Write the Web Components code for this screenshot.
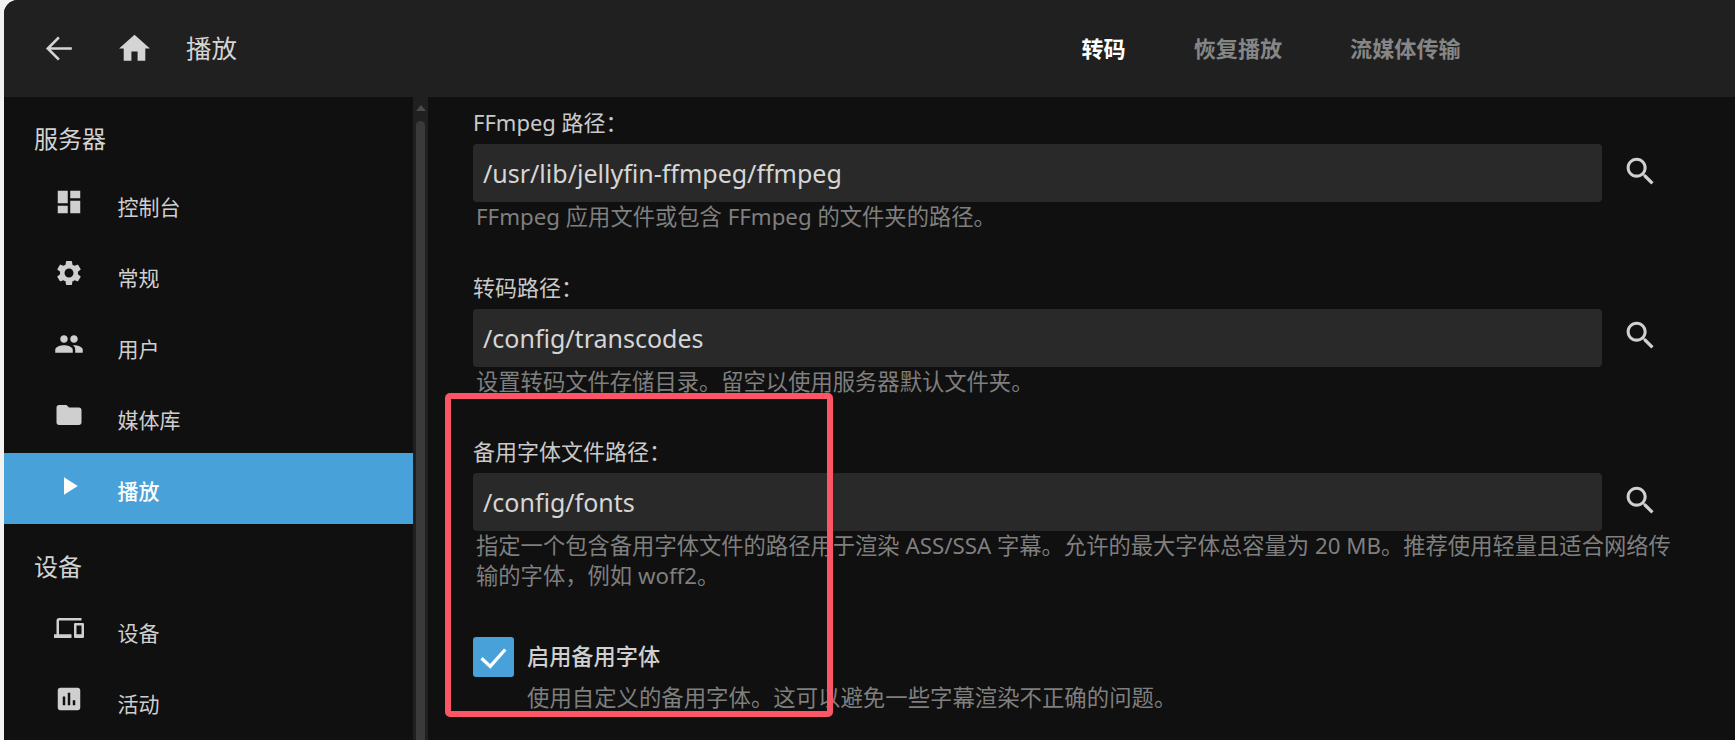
<!doctype html>
<html lang="zh-CN"><head><meta charset="utf-8"><title>播放</title>
<style>
html,body{margin:0;height:100%;background:#f2f2f2;overflow:hidden}
body{font-family:"Noto Sans","Noto Sans CJK SC",sans-serif;color:#d2d2d2}
</style></head><body>
<app-shell>
  <app-header slot="header" page-title="播放">
    <header-tab active>转码</header-tab>
    <header-tab>恢复播放</header-tab>
    <header-tab>流媒体传输</header-tab>
  </app-header>
  <side-nav slot="nav">
    <nav-title>服务器</nav-title>
    <nav-item icon="dashboard">控制台</nav-item>
    <nav-item icon="settings">常规</nav-item>
    <nav-item icon="people">用户</nav-item>
    <nav-item icon="folder">媒体库</nav-item>
    <nav-item icon="play" active>播放</nav-item>
    <nav-title>设备</nav-title>
    <nav-item icon="devices">设备</nav-item>
    <nav-item icon="assessment">活动</nav-item>
  </side-nav>
  <path-field label="FFmpeg 路径：" value="/usr/lib/jellyfin-ffmpeg/ffmpeg">FFmpeg 应用文件或包含 FFmpeg 的文件夹的路径。</path-field>
  <path-field label="转码路径：" value="/config/transcodes">设置转码文件存储目录。留空以使用服务器默认文件夹。</path-field>
  <path-field label="备用字体文件路径：" value="/config/fonts">指定一个包含备用字体文件的路径用于渲染 ASS/SSA 字幕。允许的最大字体总容量为 20 MB。推荐使用轻量且适合网络传输的字体，例如 woff2。</path-field>
  <check-field label="启用备用字体">使用自定义的备用字体。这可以避免一些字幕渲染不正确的问题。</check-field>
  <highlight-box slot="overlay"></highlight-box>
</app-shell>
<script>
const ICONS={
 back:'<path d="M20 12H4.6M11.6 4.8 4.4 12l7.2 7.2" fill="none" stroke="currentColor" stroke-width="1.7"/>',
 home:'<path d="M10 20v-6h4v6h5v-8h3L12 3 2 12h3v8z"/>',
 dashboard:'<path d="M3 13h8V3H3v10zm0 8h8v-6H3v6zm10 0h8V11h-8v10zm0-18v6h8V3h-8z"/>',
 settings:'<path d="M19.14 12.94c.04-.3.06-.61.06-.94 0-.32-.02-.64-.07-.94l2.03-1.58a.49.49 0 0 0 .12-.61l-1.92-3.32a.488.488 0 0 0-.59-.22l-2.39.96c-.5-.38-1.03-.7-1.62-.94l-.36-2.54a.484.484 0 0 0-.48-.41h-3.84c-.24 0-.43.17-.47.41l-.36 2.54c-.59.24-1.13.57-1.62.94l-2.39-.96c-.22-.08-.47 0-.59.22L2.74 8.87c-.12.21-.08.47.12.61l2.03 1.58c-.05.3-.09.63-.09.94s.02.64.07.94l-2.03 1.58a.49.49 0 0 0-.12.61l1.92 3.32c.12.22.37.29.59.22l2.39-.96c.5.38 1.03.7 1.62.94l.36 2.54c.05.24.24.41.48.41h3.84c.24 0 .44-.17.47-.41l.36-2.54c.59-.24 1.13-.56 1.62-.94l2.39.96c.22.08.47 0 .59-.22l1.92-3.32c.12-.22.07-.47-.12-.61l-2.01-1.58zM12 15.6c-1.98 0-3.6-1.62-3.6-3.6s1.62-3.6 3.6-3.6 3.6 1.62 3.6 3.6-1.62 3.6-3.6 3.6z"/>',
 people:'<path d="M16 11c1.66 0 2.99-1.34 2.99-3S17.66 5 16 5c-1.66 0-3 1.34-3 3s1.34 3 3 3zm-8 0c1.66 0 2.99-1.34 2.99-3S9.66 5 8 5C6.34 5 5 6.34 5 8s1.34 3 3 3zm0 2c-2.33 0-7 1.17-7 3.5V19h14v-2.5c0-2.33-4.67-3.5-7-3.5zm8 0c-.29 0-.62.02-.97.05 1.16.84 1.97 1.97 1.97 3.45V19h6v-2.5c0-2.33-4.67-3.5-7-3.5z"/>',
 folder:'<path d="M10 4H4c-1.1 0-1.99.9-1.99 2L2 18c0 1.1.9 2 2 2h16c1.1 0 2-.9 2-2V8c0-1.1-.9-2-2-2h-8l-2-2z"/>',
 play:'<path d="M8 5v14l11-7z"/>',
 devices:'<path d="M4 6h18V4H4c-1.1 0-2 .9-2 2v11H0v3h14v-3H4V6zm19 2h-6c-.55 0-1 .45-1 1v10c0 .55.45 1 1 1h6c.55 0 1-.45 1-1V9c0-.55-.45-1-1-1zm-1 9h-4v-7h4v7z"/>',
 assessment:'<path d="M19 3H5c-1.1 0-2 .9-2 2v14c0 1.1.9 2 2 2h14c1.1 0 2-.9 2-2V5c0-1.1-.9-2-2-2zM9 17H7v-7h2v7zm4 0h-2V7h2v10zm4 0h-2v-4h2v4z"/>',
 search:'<path d="M15.5 14h-.79l-.28-.27C15.41 12.59 16 11.11 16 9.5 16 5.91 13.09 3 9.5 3S3 5.91 3 9.5 5.91 16 9.5 16c1.61 0 3.09-.59 4.23-1.57l.27.28v.79l5 4.99L20.49 19l-4.99-5zm-6 0C7.01 14 5 11.99 5 9.5S7.01 5 9.5 5 14 7.01 14 9.5 11.99 14 9.5 14z"/>'
};
const svg=(n,s)=>`<svg width="${s}" height="${s}" viewBox="0 0 24 24" fill="currentColor" aria-hidden="true">${ICONS[n]}</svg>`;
class Base extends HTMLElement{
  render(html){ if(!this.shadowRoot) this.attachShadow({mode:'open'}); this.shadowRoot.innerHTML=html; }
}
customElements.define('app-shell',class extends Base{connectedCallback(){this.render(`<style>
  :host{display:grid;grid-template-columns:409px 15px 1fr;grid-template-rows:97px 1fr;height:740px;margin-left:4px;background:#101010;border-top-left-radius:14px;overflow:hidden;position:relative}
  .h{grid-column:1/-1}
  .bar{background:#202020;display:flex;flex-direction:column;align-items:center;padding:8px 3px 0;box-sizing:border-box}
  .up{width:0;height:0;border:5px solid transparent;border-top:0;border-bottom:6px solid #4a4a4a}
  .thumb{width:9px;flex:1;margin-top:10px;background:#3a3a3a;border-radius:5px 5px 0 0}
  main{padding:11px 0 0 45px;min-width:0;overflow:hidden}
</style>
<div class="h"><slot name="header"></slot></div>
<slot name="nav"></slot>
<div class="bar"><div class="up"></div><div class="thumb"></div></div>
<main><slot></slot></main>
<slot name="overlay"></slot>`)}});
customElements.define('app-header',class extends Base{connectedCallback(){this.render(`<style>
  :host{display:flex;align-items:center;height:97px;background:#202020;color:#d4d4d4;padding-left:37px}
  .i{display:flex}
  .home{margin-left:38px}
  h1{font:400 25.5px/1 "Noto Sans","Noto Sans CJK SC",sans-serif;margin:0 0 0 33px;width:895.5px}
  .tabs{display:flex;gap:68px;margin-top:-2px}
</style><span class="i">${svg('back',37)}</span><span class="i home">${svg('home',37)}</span><h1>${this.getAttribute('page-title')}</h1><div class="tabs"><slot></slot></div>`)}});
customElements.define('header-tab',class extends Base{connectedCallback(){const a=this.hasAttribute('active');this.render(`<style>
  :host{display:block;font-weight:700;font-size:22.1px;line-height:30px;color:${a?'#fff':'#868686'}}
</style><slot></slot>`)}});
customElements.define('side-nav',class extends Base{connectedCallback(){this.render(`<style>
  :host{display:flex;flex-direction:column;background:#101010;overflow:hidden;min-height:0}
</style><slot></slot>`)}});
customElements.define('nav-title',class extends Base{connectedCallback(){this.render(`<style>
  :host{display:flex;align-items:center;height:72px;padding:8px 0 0 30px;font-size:24px;color:#d2d2d2;box-sizing:border-box}
  :host(:not(:first-child)){height:71px;padding-top:12px}
</style><slot></slot>`)}});
customElements.define('nav-item',class extends Base{connectedCallback(){const a=this.hasAttribute('active');this.render(`<style>
  :host{display:flex;align-items:center;height:71px;padding-left:50px;font-size:21px;${a?'background:#48a1d9;color:#fff;font-weight:500;':'color:#cfcfcf;'}}
  .i{display:flex;width:30px;justify-content:center;margin-top:-5px;margin-right:33.5px}
  .t{line-height:28px;padding-top:4px}
</style><span class="i">${svg(this.getAttribute('icon'),30)}</span><span class="t"><slot></slot></span>`)}});
customElements.define('path-field',class extends Base{connectedCallback(){this.render(`<style>
  :host{display:block;margin-bottom:40.5px}
  label{display:block;font-size:22px;line-height:28px;margin-bottom:8px;color:#c9c9c9}
  .row{display:flex;align-items:center}
  .in{width:1129px;height:58px;box-sizing:border-box;background:#292929;border-radius:4px;padding:0 10px;display:flex;align-items:center;font-size:25px;color:#d6d6d6}
  .s{display:flex;margin:-4px 0 0 20px;color:#d0d0d0}
  .d{font-size:22.3px;line-height:30px;color:#7f7f7f;padding-left:3px;width:1205px}
</style><label>${this.getAttribute('label')}</label><div class="row"><div class="in">${this.getAttribute('value')}</div><span class="s">${svg('search',37)}</span></div><div class="d"><slot></slot></div>`)}});
customElements.define('check-field',class extends Base{connectedCallback(){this.render(`<style>
  :host{display:grid;grid-template-columns:41px 1fr;column-gap:13px;margin-top:46px}
  .b{width:41px;height:40px;background:#48a1d9;border-radius:3px;display:flex;align-items:center;justify-content:center;color:#fff}
  .l{font-size:22.2px;line-height:40px;color:#cfcfcf;font-weight:500}
  .d{grid-column:2;font-size:22.4px;line-height:30px;color:#7f7f7f;margin-top:6px}
</style><div class="b"><svg width="30" height="30" viewBox="0 0 24 24" fill="none" stroke="currentColor" stroke-width="2.7"><path d="M2 13 9 19.5 21 6"/></svg></div><div class="l">${this.getAttribute('label')}</div><div class="d"><slot></slot></div>`)}});
customElements.define('highlight-box',class extends Base{connectedCallback(){this.render(`<style>
  :host{position:absolute;left:441px;top:393px;width:388px;height:324px;box-sizing:border-box;border:6px solid #fb5566;border-radius:5px;pointer-events:none}
</style>`)}});
</script>
</body></html>
